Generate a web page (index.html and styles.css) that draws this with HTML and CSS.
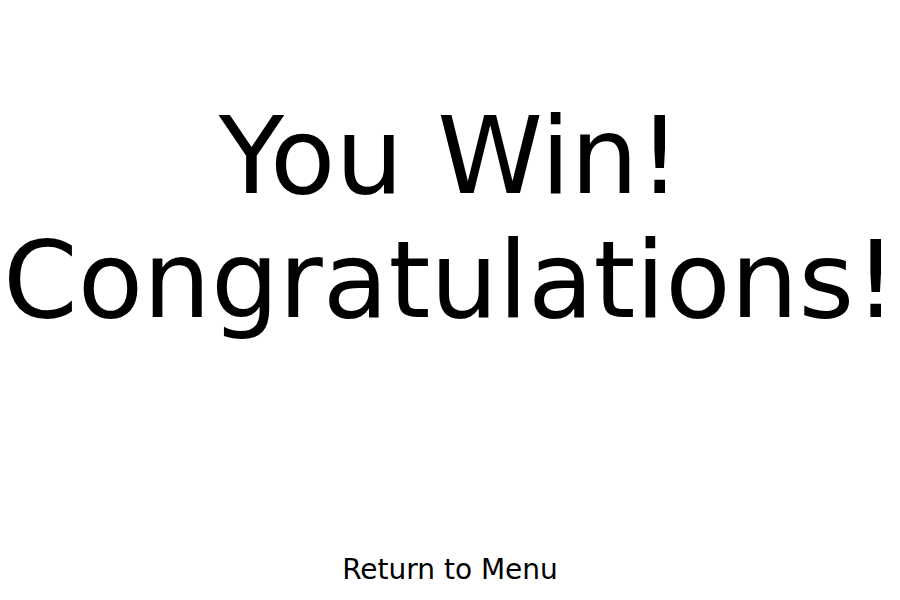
FILE: index.html
```html
<!DOCTYPE html>
<html>
<head>
<meta charset="utf-8">
<link rel="stylesheet" href="styles.css">
</head>
<body>
<div class="screen">
  <h1 class="title">You Win!<br>Congratulations!</h1>
  <button class="menu-btn">Return to Menu</button>
</div>
</body>
</html>
```
FILE: styles.css
```css
html, body {
  margin: 0;
  padding: 0;
  background: #ffffff;
}
.screen {
  width: 900px;
  height: 600px;
  display: flex;
  flex-direction: column;
  align-items: center;
  justify-content: space-between;
  font-family: "DejaVu Sans", sans-serif;
  color: #000;
  box-sizing: border-box;
  padding: 94px 0 14px;
}
.title {
  margin: 0;
  font-size: 107px;
  font-weight: normal;
  line-height: normal;
  text-align: center;
  white-space: nowrap;
}
.menu-btn {
  font-family: "DejaVu Sans", sans-serif;
  font-size: 28px;
  line-height: normal;
  background: none;
  border: none;
  padding: 0;
  margin: 0;
  color: #000;
}
```
